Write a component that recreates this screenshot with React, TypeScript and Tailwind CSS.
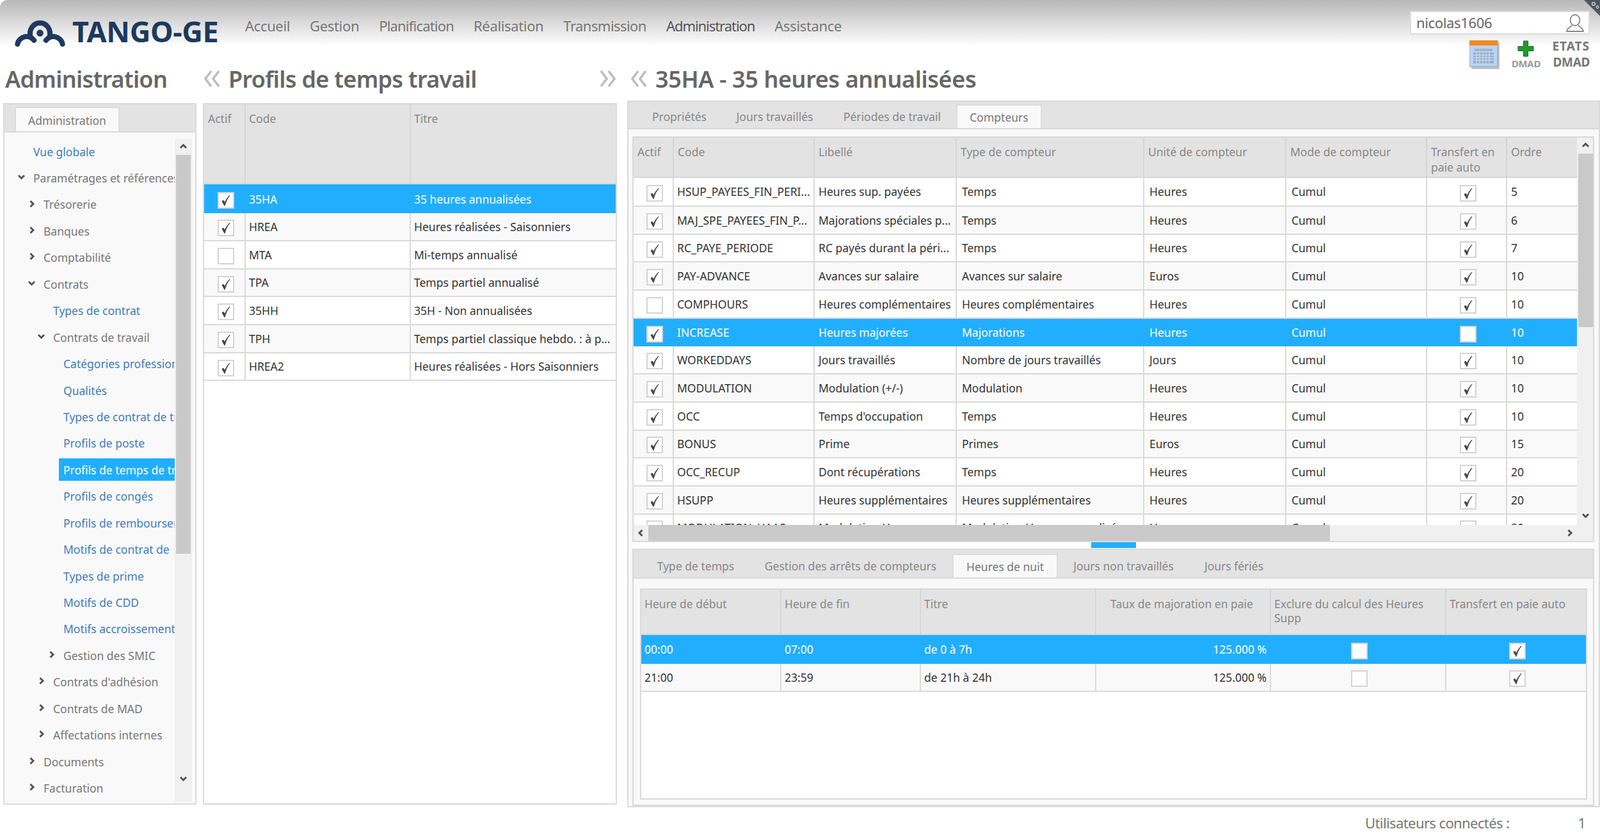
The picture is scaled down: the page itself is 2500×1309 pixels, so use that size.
import React from "react";

const BODY = "font-['Open_Sans','Noto_Sans',sans-serif]";
const ARIAL = "font-['Liberation_Sans',Arial,sans-serif]";

function Chevron({ dir, className = "" }: { dir: "up" | "down" | "left" | "right"; className?: string }) {
  const d = {
    up: "M2 8 L6.5 3.5 L11 8",
    down: "M2 4 L6.5 8.5 L11 4",
    left: "M8.5 2 L4 6.5 L8.5 11",
    right: "M4.5 2 L9 6.5 L4.5 11",
  }[dir];
  return (
    <svg viewBox="0 0 13 13" className={"w-[13px] h-[13px] shrink-0 " + className}>
      <path d={d} fill="none" stroke="#555" strokeWidth="3" />
    </svg>
  );
}

function Double({ dir }: { dir: "left" | "right" }) {
  const paths =
    dir === "left"
      ? ["M13 3 L4 15 L13 27", "M25 3 L16 15 L25 27"]
      : ["M3 3 L12 15 L3 27", "M15 3 L24 15 L15 27"];
  return (
    <svg viewBox="0 0 28 30" className="w-[28px] h-[30px] shrink-0">
      {paths.map((p) => (
        <path key={p} d={p} fill="none" stroke="#bdbdbd" strokeWidth="3.6" />
      ))}
    </svg>
  );
}

function Check({ on }: { on: boolean }) {
  return (
    <span className="block w-[26px] h-[26px] mt-[4px] mx-auto bg-white border-2 border-[#d4d4d4] shrink-0">
      {on && (
        <svg viewBox="0 0 22 22" className="w-[22px] h-[22px]">
          <path d="M5 12.5 L9 19.5 Q11.5 10 17 3 Q11.5 8.5 9.2 14.5 L7 11 Z" fill="#444" stroke="#444" strokeWidth="1" />
        </svg>
      )}
    </span>
  );
}

function VScroll({ thumb, down, className = "" }: { thumb: string; down: string; className?: string }) {
  return (
    <div className={"relative w-[27px] shrink-0 bg-[#f0f0f0] flex flex-col " + className}>
      <div className="h-[25px] flex items-center justify-center shrink-0">
        <Chevron dir="up" />
      </div>
      <div className={"mx-[2px] bg-[#c9c9c9] shrink-0 " + thumb} />
      <div className={"absolute left-[7px] " + down}>
        <Chevron dir="down" />
      </div>
    </div>
  );
}

type TreeItem = { t: string; l: 0 | 1 | 2 | 3; c?: "open" | "closed"; sel?: boolean };
const tree: TreeItem[] = [
  { t: "Vue globale", l: 0 },
  { t: "Paramétrages et références", l: 0, c: "open" },
  { t: "Trésorerie", l: 1, c: "closed" },
  { t: "Banques", l: 1, c: "closed" },
  { t: "Comptabilité", l: 1, c: "closed" },
  { t: "Contrats", l: 1, c: "open" },
  { t: "Types de contrat", l: 2 },
  { t: "Contrats de travail", l: 2, c: "open" },
  { t: "Catégories professionnelles", l: 3 },
  { t: "Qualités", l: 3 },
  { t: "Types de contrat de travail", l: 3 },
  { t: "Profils de poste", l: 3 },
  { t: "Profils de temps de travail", l: 3, sel: true },
  { t: "Profils de congés", l: 3 },
  { t: "Profils de remboursement", l: 3 },
  { t: "Motifs de contrat de", l: 3 },
  { t: "Types de prime", l: 3 },
  { t: "Motifs de CDD", l: 3 },
  { t: "Motifs accroissement", l: 3 },
  { t: "Gestion des SMIC", l: 3, c: "closed" },
  { t: "Contrats d'adhésion", l: 2, c: "closed" },
  { t: "Contrats de MAD", l: 2, c: "closed" },
  { t: "Affectations internes", l: 2, c: "closed" },
  { t: "Documents", l: 1, c: "closed" },
  { t: "Facturation", l: 1, c: "closed" },
];
const indent = ["pl-[20px]", "pl-[36px]", "pl-[51px]", "pl-[67px]"];

function Tree() {
  return (
    <div className="w-[266px] py-[9px] overflow-hidden shrink-0">
      {tree.map((it) => (
        <div key={it.t} className={"h-[41.45px] flex items-center whitespace-nowrap overflow-hidden " + indent[it.l]}>
          <span className="w-[25px] shrink-0 flex -mt-[3px]">
            {it.c && <Chevron dir={it.c === "open" ? "down" : "right"} />}
          </span>
          {it.sel ? (
            <span className="flex-1 -ml-[7px] pl-[7px] h-[35px] flex items-center bg-[#22aeff] text-white overflow-hidden">{it.t}</span>
          ) : (
            <span className={it.c ? "text-[#777]" : "text-[#3f7cc0]"}>{it.t}</span>
          )}
        </div>
      ))}
    </div>
  );
}

function Tab({ label, active, w }: { label: string; active?: boolean; w: string }) {
  return active ? (
    <div className={"relative -mb-[3px] h-full pt-[2px] bg-[#f9f9f9] border-2 border-b-0 border-[#dcdcdc] flex items-center justify-center text-[#777] shrink-0 " + w}>{label}</div>
  ) : (
    <div className={"pt-[2px] flex items-center justify-center text-[#888] shrink-0 " + w}>{label}</div>
  );
}

const cellB = "h-full border-r-2 border-[#dadada] overflow-hidden whitespace-nowrap flex items-center";

const midTpl = "grid grid-cols-[65px_258px_1fr]";
const midRows: [boolean, string, string][] = [
  [true, "35HA", "35 heures annualisées"],
  [true, "HREA", "Heures réalisées - Saisonniers"],
  [false, "MTA", "Mi-temps annualisé"],
  [true, "TPA", "Temps partiel annualisé"],
  [true, "35HH", "35H - Non annualisées"],
  [true, "TPH", "Temps partiel classique hebdo. : à p..."],
  [true, "HREA2", "Heures réalisées - Hors Saisonniers"],
];

function MidGrid() {
  return (
    <div className="h-[1096px] border-2 border-[#dadada] bg-white">
      <div className={midTpl + " h-[125px] bg-[#e3e3e3] border-b-2 border-[#d6d6d6] text-[#888]"}>
        <div className="border-r-2 border-[#d6d6d6] pl-[6px] pt-[10px] leading-[24px]">Actif</div>
        <div className="border-r-2 border-[#d6d6d6] pl-[5px] pt-[10px] leading-[24px]">Code</div>
        <div className="pl-[5px] pt-[10px] leading-[24px]">Titre</div>
      </div>
      {midRows.map((r, i) => (
        <div
          key={r[1]}
          className={
            midTpl +
            (i === 0 ? " h-[45.3px] " : " h-[43.7px] ") +
            (i === 0
              ? "bg-[#22aeff] text-white"
              : "border-b-2 border-[#dadada] text-[#333] " + (i % 2 ? "bg-[#f9f9f9]" : "bg-white"))
          }
        >
          <div className={cellB + " pl-[5px]" + (i === 0 ? " border-transparent" : "")}>
            <Check on={r[0]} />
          </div>
          <div className={cellB + " pl-[5px]" + (i === 0 ? " border-transparent" : "")}>{r[1]}</div>
          <div className="h-full pl-[5px] overflow-hidden whitespace-nowrap flex items-center">{r[2]}</div>
        </div>
      ))}
    </div>
  );
}

const cntTpl = "grid grid-cols-[63px_220px_222px_293px_222px_220px_125px_109px]";
type Cnt = [boolean, string, string, string, string, boolean, string];
const cntRows: Cnt[] = [
  [true, "HSUP_PAYEES_FIN_PERI...", "Heures sup. payées", "Temps", "Heures", true, "5"],
  [true, "MAJ_SPE_PAYEES_FIN_P...", "Majorations spéciales p...", "Temps", "Heures", true, "6"],
  [true, "RC_PAYE_PERIODE", "RC payés durant la péri...", "Temps", "Heures", true, "7"],
  [true, "PAY-ADVANCE", "Avances sur salaire", "Avances sur salaire", "Euros", true, "10"],
  [false, "COMPHOURS", "Heures complémentaires", "Heures complémentaires", "Heures", true, "10"],
  [true, "INCREASE", "Heures majorées", "Majorations", "Heures", false, "10"],
  [true, "WORKEDDAYS", "Jours travaillés", "Nombre de jours travaillés", "Jours", true, "10"],
  [true, "MODULATION", "Modulation (+/-)", "Modulation", "Heures", true, "10"],
  [true, "OCC", "Temps d'occupation", "Temps", "Heures", true, "10"],
  [true, "BONUS", "Prime", "Primes", "Euros", true, "15"],
  [true, "OCC_RECUP", "Dont récupérations", "Temps", "Heures", true, "20"],
  [true, "HSUPP", "Heures supplémentaires", "Heures supplémentaires", "Heures", true, "20"],
  [false, "MODULATION_HAAS", "Modulation Heures an...", "Modulation Heures annualisées", "Heures", false, "30"],
];

function CounterGrid() {
  const heads = ["Actif", "Code", "Libellé", "Type de compteur", "Unité de compteur", "Mode de compteur", "Transfert en paie auto", "Ordre"];
  return (
    <div className="h-[634px] border-2 border-[#dadada] flex flex-col bg-white ml-[6px] mr-[7px] mt-[11px]">
      <div className="h-[605px] flex overflow-hidden">
        <div className="w-[1474px] shrink-0 overflow-hidden">
          <div className={cntTpl + " h-[63px] bg-[#e3e3e3] border-b-2 border-[#d6d6d6] text-[#888]"}>
            {heads.map((h, i) => (
              <div key={h} className={"pl-[6px] pr-[4px] pt-[10px] leading-[24px] " + (i < 7 ? "border-r-2 border-[#d6d6d6]" : "")}>{h}</div>
            ))}
          </div>
          {cntRows.map((r, i) => {
            const sel = i === 5;
            return (
              <div
                key={r[1]}
                className={
                  cntTpl +
                  (i === 0 ? " h-[45px] " : " h-[43.7px] ") +
                  (sel ? "bg-[#22aeff] text-white" : "border-b-2 border-[#dadada] text-[#333] " + (i % 2 ? "bg-[#f9f9f9]" : "bg-white"))
                }
              >
                <div className={cellB + " pl-[5px]" + (sel ? " border-transparent" : "")}><Check on={r[0]} /></div>
                <div className={cellB + " pl-[5px]" + (sel ? " border-transparent" : "")}>{r[1]}</div>
                <div className={cellB + " pl-[6px]" + (sel ? " border-transparent" : "")}>{r[2]}</div>
                <div className={cellB + " pl-[8px]" + (sel ? " border-transparent" : "")}>{r[3]}</div>
                <div className={cellB + " pl-[8px]" + (sel ? " border-transparent" : "")}>{r[4]}</div>
                <div className={cellB + " pl-[8px]" + (sel ? " border-transparent" : "")}>Cumul</div>
                <div className={cellB + " pl-[4px]" + (sel ? " border-transparent" : "")}><Check on={r[5]} /></div>
                <div className="h-full pl-[6px] flex items-center">{r[6]}</div>
              </div>
            );
          })}
        </div>
        <VScroll thumb="h-[271px]" down="bottom-[8px]" className="h-[605px]" />
      </div>
      <div className="h-[25px] bg-[#f0f0f0] flex items-center shrink-0">
        <span className="w-[23px] flex justify-center"><Chevron dir="left" /></span>
        <div className="w-[1065px] h-[25px] bg-[#c9c9c9]" />
        <span className="ml-auto mr-[30px]"><Chevron dir="right" /></span>
      </div>
    </div>
  );
}

const nuitTpl = "grid grid-cols-[219px_218px_274px_273px_274px_1fr]";
function NightGrid() {
  const heads = ["Heure de début", "Heure de fin", "Titre", "Taux de majoration en paie", "Exclure du calcul des Heures Supp", "Transfert en paie auto"];
  const rows: [string, string, string][] = [
    ["00:00", "07:00", "de 0 à 7h"],
    ["21:00", "23:59", "de 21h à 24h"],
  ];
  return (
    <div className="h-[330px] ml-[10px] mr-[9px] mt-[15px] border-2 border-[#dadada] bg-white">
      <div className={nuitTpl + " h-[71px] bg-[#e3e3e3] border-b-2 border-[#d6d6d6] text-[#888]"}>
        {heads.map((h, i) => (
          <div key={h} className={"pt-[11px] leading-[22px] " + (i === 3 ? "text-right pl-[6px] pr-[26px] " : "px-[5px] ") + (i < 5 ? "border-r-2 border-[#d6d6d6]" : "")}>{h}</div>
        ))}
      </div>
      {rows.map((r, i) => (
        <div
          key={r[0]}
          className={
            nuitTpl +
            (i === 0 ? " h-[45px] bg-[#22aeff] text-white" : " h-[43.7px] bg-[#f9f9f9] border-b-2 border-[#dadada] text-[#333]")
          }
        >
          {r.map((c) => (
            <div key={c} className={cellB + " pl-[5px]" + (i === 0 ? " border-transparent" : "")}>{c}</div>
          ))}
          <div className={cellB + " justify-end pr-[5px]" + (i === 0 ? " border-transparent" : "")}>125.000 %</div>
          <div className={cellB + " pl-[4px]" + (i === 0 ? " border-transparent" : "")}><Check on={false} /></div>
          <div className="h-full pl-[4px] flex items-center"><Check on={true} /></div>
        </div>
      ))}
    </div>
  );
}

function Logo() {
  return (
    <svg viewBox="0 0 280 156" className="w-[93px] h-[52px] shrink-0">
      <g fill="none" stroke="#1d3a5e" strokeWidth="24" strokeLinecap="round">
        <path d="M84 100 C72 60 100 32 128 32 C156 32 184 60 172 100" />
        <path d="M22 132 C26 108 50 96 66 96 C82 96 92 104 100 114" />
        <path d="M234 132 C230 108 206 96 190 96 C174 96 164 104 156 114" />
      </g>
      <circle cx="128" cy="80" r="16" fill="#1d3a5e" />
    </svg>
  );
}

function Header() {
  const nav = [
    { t: "Accueil", c: "" },
    { t: "Gestion", c: "" },
    { t: "Planification", c: "tracking-[-0.8px]" },
    { t: "Réalisation", c: "" },
    { t: "Transmission", c: "tracking-[-0.55px]" },
    { t: "Administration", c: "text-[#555] tracking-[-1.05px]" },
    { t: "Assistance", c: "" },
  ];
  return (
    <div className={"h-[107px] bg-[linear-gradient(#b8b8b8,#ffffff_72px)] bg-no-repeat rounded-tl-[12px] flex tracking-[-0.35px] " + ARIAL}>
      <div className="w-[383px] pl-[20px] pt-[25px] flex items-start shrink-0">
        <Logo />
        <span className="mt-[2px] text-[45px] leading-[44px] font-bold text-[#1d3a5e] font-['Lato',sans-serif] tracking-[-0.3px]">TANGO-GE</span>
      </div>
      <nav className="flex gap-[31px] pt-[27px] text-[22px] leading-[26px] text-[#777] flex-1 items-start">
        {nav.map((n) => (
          <span key={n.t} className={n.c}>{n.t}</span>
        ))}
      </nav>
      <div className="w-[297px] shrink-0 pt-[17px] pr-[16px] flex flex-col">
        <div className="h-[37px] bg-white border-2 border-[#dddddd] flex items-center pl-[8px] pr-[6px] text-[22px] text-[#666]">
          <span className="flex-1">nicolas1606</span>
          <svg viewBox="0 0 30 30" className="w-[30px] h-[30px]">
            <ellipse cx="15" cy="10.5" rx="7.5" ry="8.5" fill="none" stroke="#888" strokeWidth="1.8" />
            <path d="M10 18 C9 22 2.5 22 2 28 H28 C27.5 22 21 22 20 18" fill="none" stroke="#888" strokeWidth="1.8" />
          </svg>
        </div>
        <div className="flex justify-end items-start mt-[6px]">
          <svg viewBox="0 0 48 46" className="w-[48px] h-[46px] mr-[17px] mt-[3px]">
            <rect x="3" y="3" width="44" height="42" fill="#c4c4c4" />
            <rect x="0" y="0" width="44" height="41" fill="#b9d4f2" stroke="#7f9fc8" strokeWidth="1" />
            <rect x="0" y="0" width="44" height="8" fill="#f08a24" />
            <rect x="8" y="13" width="28" height="4" fill="#a5b5c9" />
            <rect x="6" y="19" width="32" height="17" fill="#94aecf" />
            <path d="M6 23H38M6 27H38M6 31H38M11 19V36M16 19V36M21 19V36M26 19V36M31 19V36" stroke="#dbe7f6" strokeWidth="1" />
          </svg>
          <div className="flex flex-col items-center w-[46px] mr-[18px] mt-[3px]">
            <svg viewBox="0 0 26 26" className="w-[26px] h-[26px]">
              <path d="M9.5 1H16.5V9.5H25V16.5H16.5V25H9.5V16.5H1V9.5H9.5Z" fill="#1f9a2c" stroke="#0f6f1c" strokeWidth="1" />
            </svg>
            <span className="text-[15px] leading-[16px] font-bold text-[#9a9a9a] mt-[2px]">DMAD</span>
          </div>
          <div className="flex flex-col items-end text-[19px] leading-[25px] font-bold text-[#777]">
            <span className="tracking-[1px]">ETATS</span>
            <span>DMAD</span>
          </div>
        </div>
      </div>
    </div>
  );
}

export default function App() {
  return (
    <div className={"relative w-[2500px] h-[1309px] overflow-hidden bg-white text-[17.5px] " + BODY}>
      <Header />
      <svg viewBox="0 0 25 25" className="absolute top-0 right-0 w-[25px] h-[25px]">
        <polygon points="0,0 25,0 25,25" fill="#4b5663" />
        <circle cx="15" cy="6" r="2.4" fill="none" stroke="#cfd4da" strokeWidth="1.4" />
        <circle cx="21" cy="11" r="1.8" fill="none" stroke="#cfd4da" strokeWidth="1.2" />
      </svg>
      <div className="flex -mt-[8px]">
        {/* left column */}
        <div className="w-[302px] ml-[5px] shrink-0">
          <h1 className="h-[62px] pl-[3px] pt-[1px] text-[36px] leading-[48px] font-semibold text-[#666] tracking-[-0.7px]">Administration</h1>
          <div className="h-[1096px] border-2 border-[#dadada] bg-[#f9f9f9] flex flex-col">
            <div className="h-[44px] bg-[#e3e3e3] border-b-2 border-[#dadada] pt-[4px] pl-[16px] flex shrink-0">
              <Tab label="Administration" active w="w-[164px]" />
            </div>
            <div className="flex flex-1 min-h-0">
              <Tree />
              <VScroll thumb="h-[623px]" down="bottom-[29px]" className="mt-[10px] h-[1035px]" />
            </div>
          </div>
        </div>
        {/* middle column */}
        <div className="w-[647px] ml-[10px] shrink-0">
          <div className="h-[62px] flex items-start pt-[9px]">
            <Double dir="left" />
            <h2 className="ml-[12px] flex-1 text-[36px] leading-[48px] -mt-[8px] font-semibold text-[#666] tracking-[-0.7px]">Profils de temps travail</h2>
            <Double dir="right" />
          </div>
          <MidGrid />
        </div>
        {/* right column */}
        <div className="w-[1520px] ml-[16px] shrink-0">
          <div className="h-[58px] flex items-start pt-[9px] pl-[4px]">
            <Double dir="left" />
            <h2 className="ml-[12px] text-[36px] leading-[48px] -mt-[8px] font-semibold text-[#666] tracking-[-0.4px]">35HA - 35 heures annualisées</h2>
          </div>
          <div className="h-[1104px] border-2 border-[#dadada] bg-[#f9f9f9] flex flex-col">
            <div className="h-[43px] bg-[#e3e3e3] border-b-2 border-[#dadada] pt-[4px] pl-[14px] flex shrink-0">
              <Tab label="Propriétés" w="w-[131px]" />
              <Tab label="Jours travaillés" w="w-[167px]" />
              <Tab label="Périodes de travail" w="w-[200px]" />
              <Tab label="Compteurs" active w="w-[134px]" />
            </div>
            <CounterGrid />
            <div className="h-[10px] ml-[6px] mr-[7px] bg-white flex justify-center shrink-0">
              <div className="w-[70px] h-[9px] bg-[#22aeff]" />
            </div>
            <div className="ml-[6px] mr-[7px] flex-1 border-2 border-[#dadada] bg-[#f9f9f9] flex flex-col min-h-0">
              <div className="h-[45px] bg-[#e3e3e3] border-b-2 border-[#dadada] pt-[6px] pl-[14px] flex shrink-0">
                <Tab label="Type de temps" w="w-[166px]" />
                <Tab label="Gestion des arrêts de compteurs" w="w-[318px]" />
                <Tab label="Heures de nuit" active w="w-[165px]" />
                <Tab label="Jours non travaillés" w="w-[205px]" />
                <Tab label="Jours fériés" w="w-[140px]" />
              </div>
              <NightGrid />
            </div>
          </div>
        </div>
      </div>
      <div className={"absolute top-[1272px] left-[2133px] flex w-[345px] justify-between text-[22px] leading-[26px] text-[#777] " + ARIAL}>
        <span className="tracking-[-0.6px]">Utilisateurs connectés :</span>
        <span>1</span>
      </div>
    </div>
  );
}
